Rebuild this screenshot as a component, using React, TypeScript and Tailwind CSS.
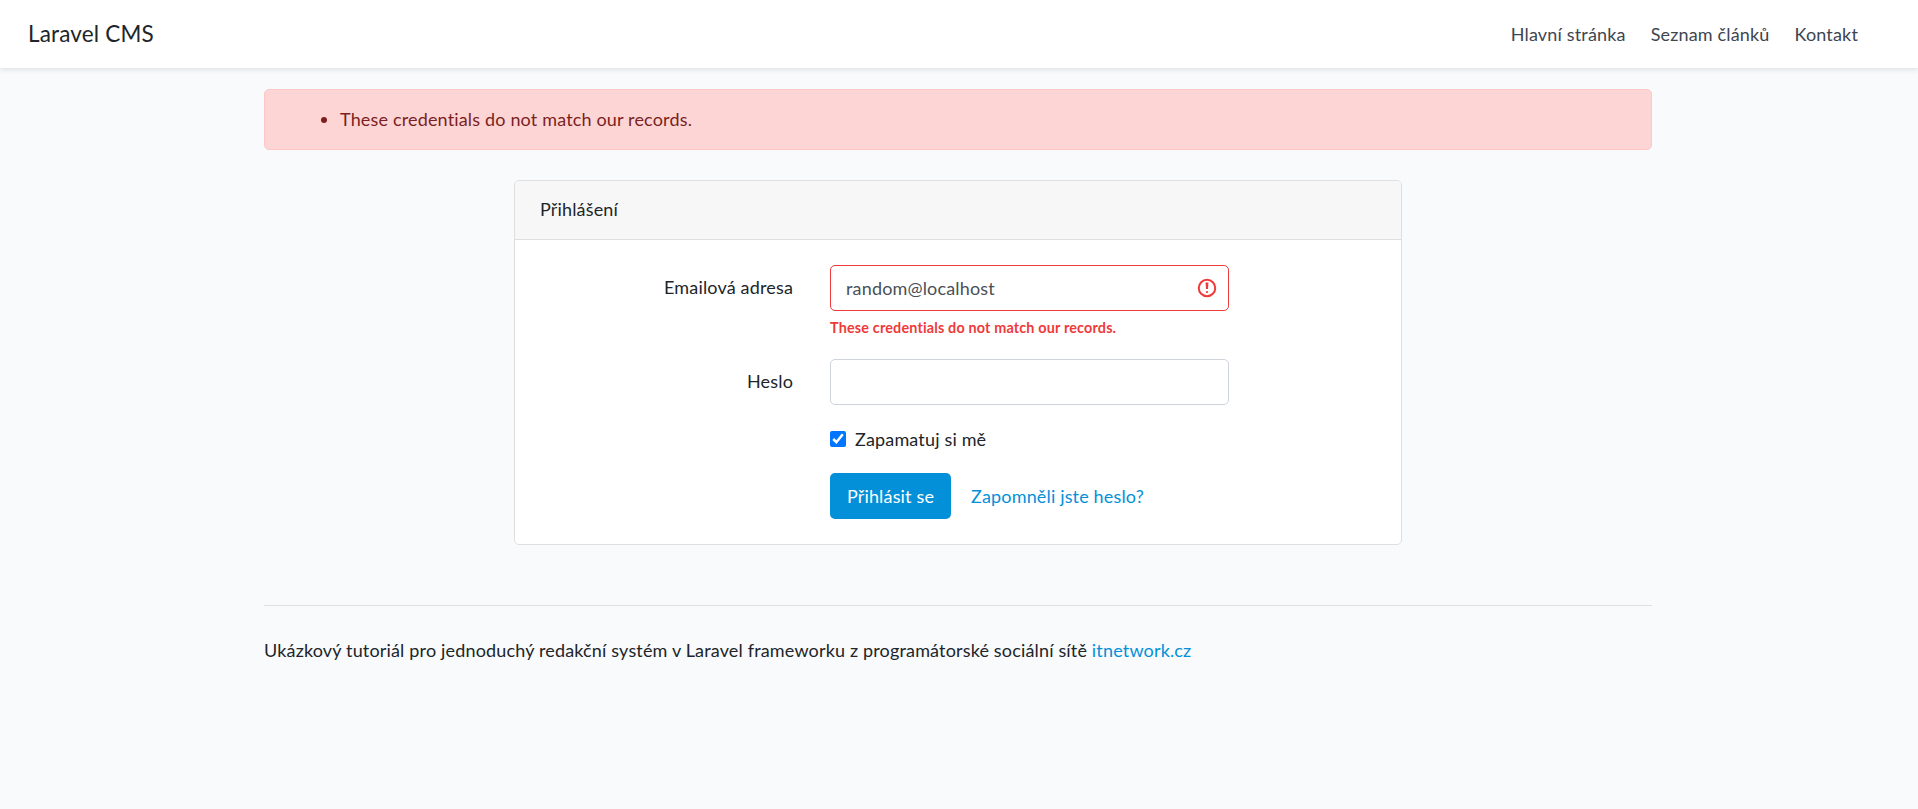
export default function App() {
  return (
    <div className="min-h-[809px] bg-[#f8fafc] text-[18px] leading-[28.8px] tracking-[0.009em] text-[#212529] font-['Lato','Liberation_Sans',sans-serif]">
      <nav className="flex h-[68px] items-center justify-between bg-white pl-[28px] pr-[60px] shadow-[0_2px_5px_rgba(0,0,0,0.1)]">
        <a className="text-[22.5px] text-[#212529]">Laravel CMS</a>
        <ul className="flex gap-[25px] text-[#3d4650]">
          <li>Hlavní stránka</li>
          <li>Seznam článků</li>
          <li>Kontakt</li>
        </ul>
      </nav>
      <main className="ml-[264px] w-[1388px] pt-[21px]">
        <div className="rounded-[5px] border border-[#fcc8c8] bg-[#fdd5d5] py-[15px] pl-[25px] pr-[25px] text-[#7b1f1f]">
          <ul className="list-disc pl-[50px]">
            <li>These credentials do not match our records.</li>
          </ul>
        </div>
        <section className="mx-auto mt-[30px] w-[888px] rounded-[5px] border border-[#dfdfdf] bg-white">
          <header className="rounded-t-[4px] border-b border-[#dfdfdf] bg-[#f7f7f7] px-[25px] py-[14.5px]">Přihlášení</header>
          <form className="flex flex-col gap-[20px] p-[25px]">
            <div className="flex gap-[37px]">
              <label className="w-[253px] py-[8.5px] text-right">Emailová adresa</label>
              <div className="w-[399px]">
                <div className="relative">
                  <input
                    readOnly
                    value="random@localhost"
                    className="h-[46px] w-full rounded-[5px] border border-[#ef3a3a] bg-white px-[15px] text-[#495057] outline-none"
                  />
                  <svg viewBox="0 0 12 12" className="absolute right-[11px] top-[12px] h-[22px] w-[22px]" fill="none" stroke="#ef3a3a" strokeWidth="1.1">
                    <circle cx="6" cy="6" r="4.5" />
                    <path d="M5.8 3.6h.4L6 6.5z" />
                    <circle cx="6" cy="8.2" r=".6" fill="#ef3a3a" stroke="none" />
                  </svg>
                </div>
                <p className="mt-[5px] text-[14.4px] font-bold leading-[23px] text-[#ef3a3a]">These credentials do not match our records.</p>
              </div>
            </div>
            <div className="flex gap-[37px]">
              <label className="w-[253px] py-[8.5px] text-right">Heslo</label>
              <input className="h-[46px] w-[399px] rounded-[5px] border border-[#ced4da] bg-white px-[15px] outline-none" />
            </div>
            <div className="flex pl-[290px]">
              <label className="flex items-center gap-[9px]">
                <input type="checkbox" defaultChecked className="m-0 h-4 w-4" />
                <span>Zapamatuj si mě</span>
              </label>
            </div>
            <div className="flex items-center gap-[20px] pl-[290px]">
              <button type="button" className="h-[46px] w-[121px] rounded-[5px] bg-[#0490d8] text-white">Přihlásit se</button>
              <a className="text-[#0490d8]">Zapomněli jste heslo?</a>
            </div>
          </form>
        </section>
        <hr className="mt-[60px] border-t border-[#dee0e2]" />
        <footer className="mt-[30px]">
          Ukázkový tutoriál pro jednoduchý redakční systém v Laravel frameworku z programátorské sociální sítě <a className="text-[#0490d8]">itnetwork.cz</a>
        </footer>
      </main>
    </div>
  );
}
